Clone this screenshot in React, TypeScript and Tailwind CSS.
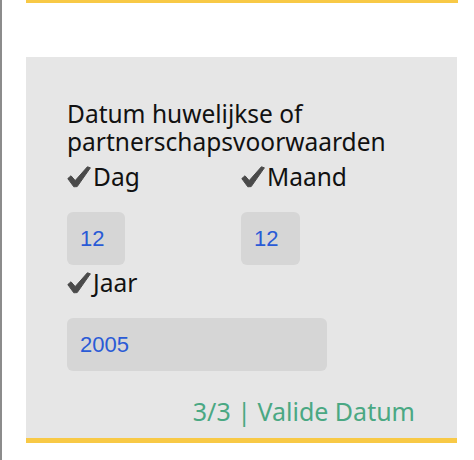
import React from 'react';

function Check() {
  return (
    <svg className="w-[24px] h-[22px] shrink-0" viewBox="0 0 24 22" fill="#4a4a4a">
      <path
        d="M0.8 12.6 L4 9.8 L8.2 14.6 L20.4 0.8 L23.4 1.8 L10.2 20.6 L6.8 20.8 Z"
        stroke="#4a4a4a"
        strokeWidth={1}
        strokeLinejoin="round"
      />
    </svg>
  );
}

function FieldLabel({ label }: { label: string }) {
  return (
    <div className="flex items-center h-[32px] text-[24.5px] leading-[32px] text-[#111]">
      <Check />
      <span className="ml-[2px]">{label}</span>
    </div>
  );
}

function ValueBox({ value, width }: { value: string; width: string }) {
  return (
    <div
      className={`${width} h-[53px] mt-[19px] rounded-[6px] bg-[#d6d6d6] flex items-center px-[13px] text-[22px] text-[#2a5bd6] font-['Liberation_Sans',Arial,sans-serif]`}
    >
      {value}
    </div>
  );
}

export default function App() {
  return (
    <div className="h-[460px] bg-white border-l-2 border-[#8c8c8c] font-['Noto_Sans',sans-serif]">
      <div className="ml-[24px] w-[432px] h-[3px] bg-[#f8c946]"></div>

      <div className="ml-[24px] mt-[54px] w-[431px] bg-[#e6e6e6] border-b-[5px] border-[#f8c946] pt-[43px] pb-[12px] pl-[41px] pr-[42px]">
        <h3 className="text-[24.5px] leading-[28px] text-[#111] font-normal">
          <span className="block">Datum huwelijkse of</span>
          <span className="block">partnerschapsvoorwaarden</span>
        </h3>

        <div className="grid grid-cols-2 mt-[5px]">
          <div>
            <FieldLabel label="Dag" />
            <ValueBox value="12" width="w-[58px]" />
          </div>
          <div>
            <FieldLabel label="Maand" />
            <ValueBox value="12" width="w-[59px]" />
          </div>
        </div>

        <div className="mt-[2px]">
          <FieldLabel label="Jaar" />
          <ValueBox value="2005" width="w-[260px]" />
        </div>

        <div className="mt-[25px] text-right text-[25px] leading-[30px] text-[#4aa883]">
          3/3 | Valide Datum
        </div>
      </div>
    </div>
  );
}
